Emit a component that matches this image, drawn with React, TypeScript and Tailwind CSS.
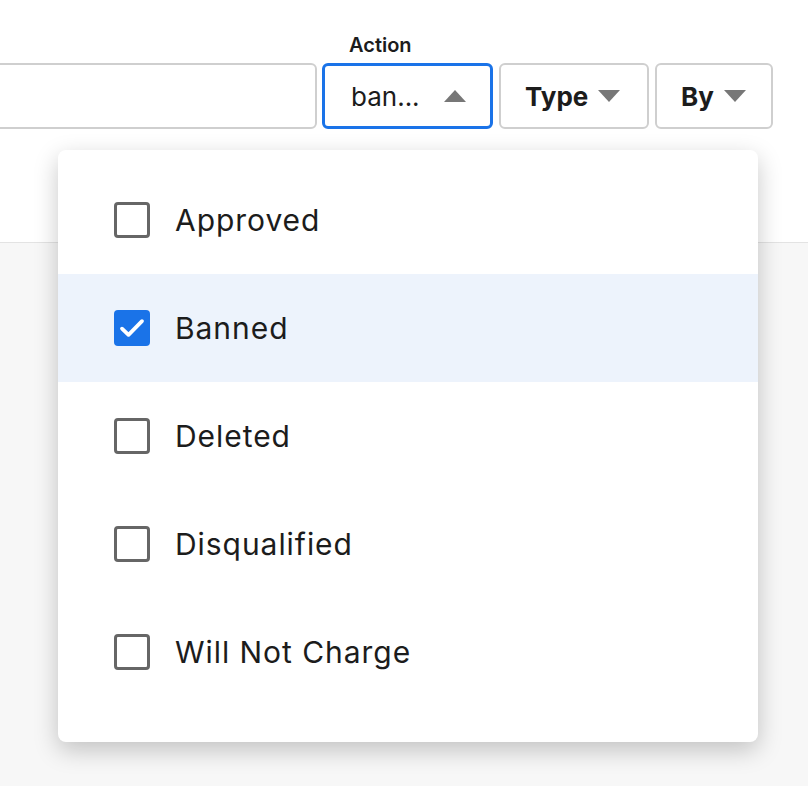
import { useState } from 'react';

const options = ['Approved', 'Banned', 'Deleted', 'Disqualified', 'Will Not Charge'];

function Caret({ up = false }: { up?: boolean }) {
  return (
    <svg width="22" height="12" viewBox="0 0 22 12" className="shrink-0">
      <path d={up ? 'M0 12 L11 0 L22 12 Z' : 'M0 0 L22 0 L11 12 Z'} fill="#777777" />
    </svg>
  );
}

function Checkbox({ checked }: { checked: boolean }) {
  if (checked) {
    return (
      <span className="flex h-[36px] w-[36px] shrink-0 items-center justify-center rounded-[4px] bg-[#1a73e8]">
        <svg width="30" height="30" viewBox="0 0 24 24" fill="none">
          <path d="M4 12.5 L9.2 17.5 L20 6.5" stroke="white" strokeWidth="3" strokeLinecap="round" strokeLinejoin="round" />
        </svg>
      </span>
    );
  }
  return <span className="h-[36px] w-[36px] shrink-0 rounded-[4px] border-[3px] border-[#666666] bg-white" />;
}

export default function App() {
  const [selected, setSelected] = useState<string[]>(['Banned']);

  const toggle = (opt: string) =>
    setSelected(prev => (prev.includes(opt) ? prev.filter(o => o !== opt) : [...prev, opt]));

  return (
    <div className="relative h-[786px] w-[808px] overflow-hidden bg-[#f7f7f7] font-['Inter','Liberation_Sans',sans-serif] text-[#1c1c1c]">
      <div className="h-[243px] border-b border-[#e3e3e3] bg-white">
        <div className="flex items-end gap-[5px] pt-[33px]">
          <div className="-ml-[20px] h-[66px] w-[337px] rounded-[6px] border-2 border-[#cfcfcf] bg-white" />
          <div className="flex flex-col">
            <span className="mb-[6px] pl-[27px] text-[20px] font-semibold leading-[24px]">Action</span>
            <button className="flex h-[66px] w-[171px] items-center justify-between rounded-[6px] border-[3px] border-[#1a73e8] bg-white pl-[26px] pr-[24px] text-[26px]">
              <span>ban...</span>
              <Caret up />
            </button>
          </div>
          <button className="ml-px flex h-[66px] w-[150px] items-center gap-[10px] rounded-[6px] border-2 border-[#cfcfcf] bg-white pl-[24px] text-[26px] font-bold">
            <span>Type</span>
            <Caret />
          </button>
          <button className="ml-px flex h-[66px] w-[118px] items-center gap-[10px] rounded-[6px] border-2 border-[#cfcfcf] bg-white pl-[24px] text-[26px] font-bold">
            <span>By</span>
            <Caret />
          </button>
        </div>
      </div>

      {/* action filter menu */}
      <div className="absolute left-[58px] top-[150px] w-[700px] rounded-[8px] bg-white pb-[36px] pt-[16px] shadow-[0_8px_24px_rgba(0,0,0,0.22)]">
        {options.map(opt => {
          const checked = selected.includes(opt);
          return (
            <div
              key={opt}
              onClick={() => toggle(opt)}
              className={`flex h-[108px] cursor-pointer items-center gap-[25px] pl-[56px] ${checked ? 'bg-[#edf3fc]' : ''}`}
            >
              <Checkbox checked={checked} />
              <span className="text-[30px] tracking-[0.95px]">{opt}</span>
            </div>
          );
        })}
      </div>
    </div>
  );
}
